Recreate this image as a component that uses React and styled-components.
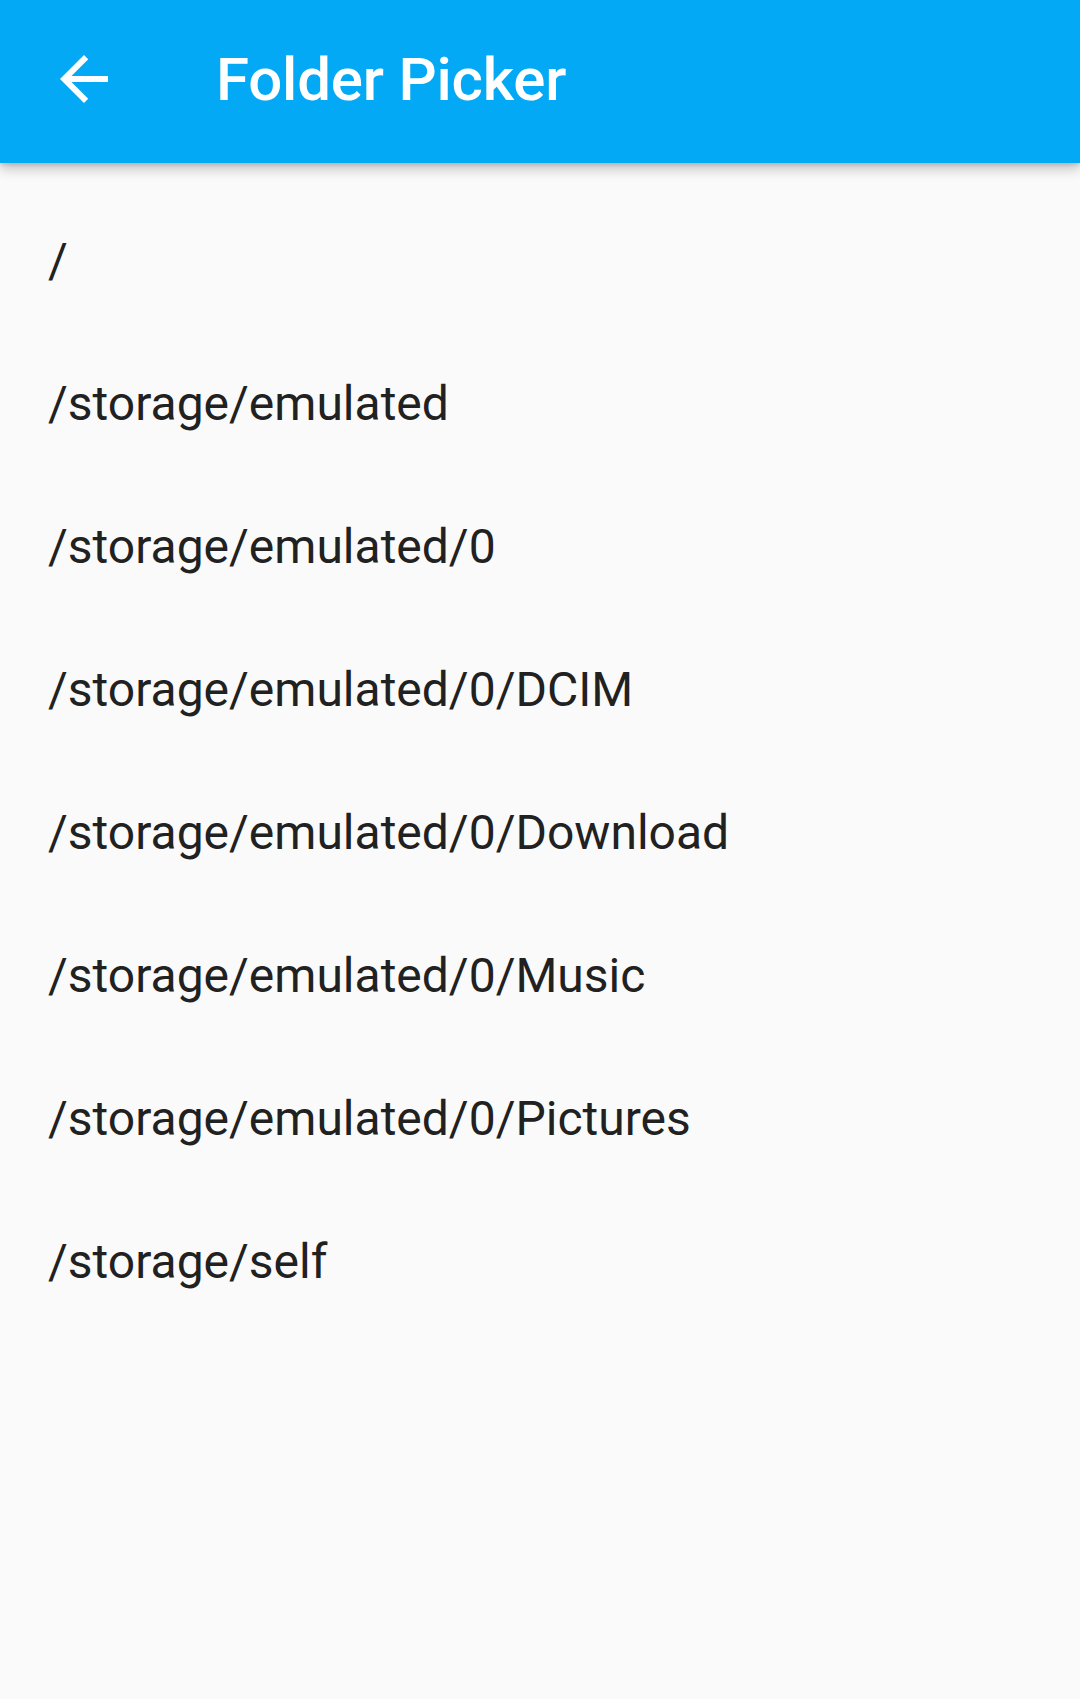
import React from 'react';
import styled, { createGlobalStyle } from 'styled-components';

const GlobalStyle = createGlobalStyle`
  html, body {
    margin: 0;
    padding: 0;
    background: #fafafa;
  }
  body {
    font-family: Roboto, 'Noto Sans', sans-serif;
  }
`;

const Screen = styled.div`
  min-height: 1699px;
  background: #fafafa;
  display: flex;
  flex-direction: column;
`;

const AppBar = styled.header`
  box-sizing: border-box;
  height: 163px;
  background: #03a9f4;
  display: flex;
  align-items: center;
  padding: 0 0 5px 48px;
  gap: 96px;
  box-shadow: 0 6px 12px rgba(0, 0, 0, 0.22), 0 2px 4px rgba(0, 0, 0, 0.12);
  position: relative;
  z-index: 1;
  flex-shrink: 0;
`;

const BackButton = styled.button`
  width: 72px;
  height: 72px;
  padding: 0;
  border: none;
  background: none;
  display: flex;
  align-items: center;
  justify-content: center;
  cursor: pointer;
  svg {
    display: block;
  }
`;

const Title = styled.h1`
  margin: 0;
  color: #ffffff;
  font-family: Roboto, sans-serif;
  font-weight: 500;
  font-size: 60px;
  letter-spacing: -0.2px;
  line-height: normal;
`;

const FolderList = styled.ul`
  list-style: none;
  margin: 0;
  padding: 26px 0 0;
`;

const FolderRow = styled.li`
  height: 143px;
  display: flex;
  align-items: center;
  padding: 0 48px;
  color: #212121;
  font-family: Roboto, sans-serif;
  font-size: 48px;
  line-height: normal;
  cursor: pointer;
`;

const folders = [
  '/',
  '/storage/emulated',
  '/storage/emulated/0',
  '/storage/emulated/0/DCIM',
  '/storage/emulated/0/Download',
  '/storage/emulated/0/Music',
  '/storage/emulated/0/Pictures',
  '/storage/self',
];

function ArrowBack() {
  return (
    <svg width="72" height="72" viewBox="0 0 24 24" fill="#ffffff">
      <path d="M20 11H7.83l5.59-5.59L12 4l-8 8 8 8 1.41-1.41L7.83 13H20v-2z" />
    </svg>
  );
}

export default function App() {
  return (
    <Screen>
      <GlobalStyle />
      <AppBar>
        <BackButton type="button" aria-label="Back">
          <ArrowBack />
        </BackButton>
        <Title>Folder Picker</Title>
      </AppBar>
      <FolderList>
        {folders.map((path) => (
          <FolderRow key={path}>{path}</FolderRow>
        ))}
      </FolderList>
    </Screen>
  );
}
